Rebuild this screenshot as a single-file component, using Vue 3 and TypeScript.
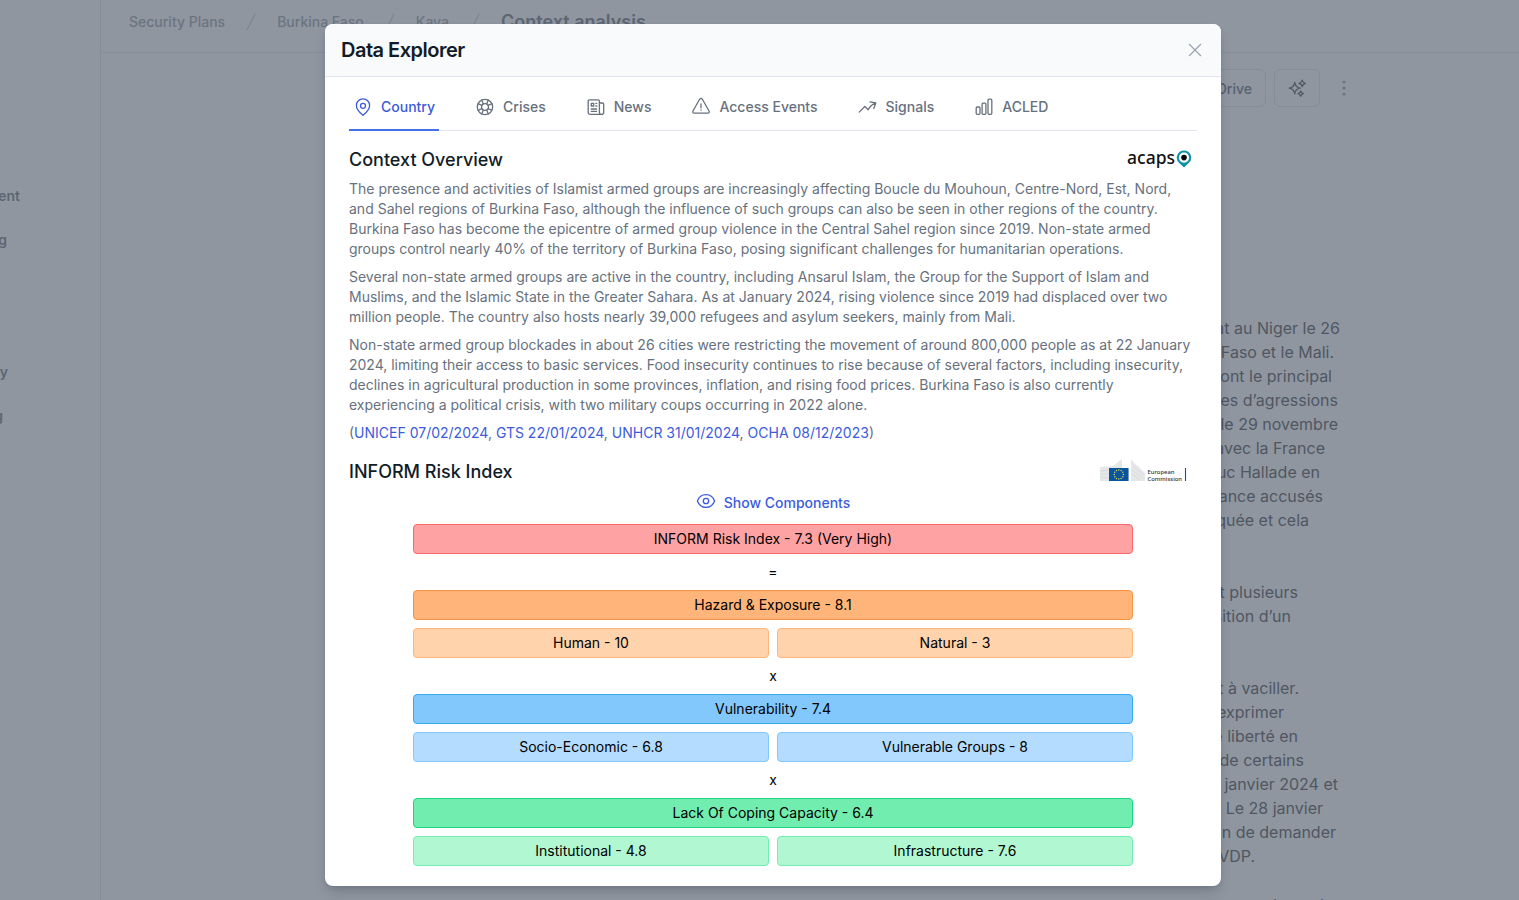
<script setup lang="ts">
interface Line { text: string; end: number; top: number }

const navItems: Line[] = [
  { text: 'Management', end: 20, top: 186 },
  { text: 'Planning', end: 7, top: 230 },
  { text: 'Security', end: 8, top: 362 },
  { text: 'Training', end: 3, top: 406 },
]

const crumbs = ['Security Plans', 'Burkina Faso', 'Kaya']

const article: Line[] = [
  { text: 'at au Niger le 26', end: 1340, top: 316 },
  { text: 'Faso et le Mali.', end: 1334, top: 340 },
  { text: 'ont le principal', end: 1332, top: 364 },
  { text: 'es d’agressions', end: 1338, top: 388 },
  { text: 'le 29 novembre', end: 1338, top: 412 },
  { text: 'avec la France', end: 1325, top: 436 },
  { text: 'Luc Hallade en', end: 1320, top: 460 },
  { text: 'France accusés', end: 1323, top: 484 },
  { text: 'quée et cela', end: 1309, top: 508 },
  { text: 'et plusieurs', end: 1298, top: 580 },
  { text: 'sition d’un', end: 1291, top: 604 },
  { text: 'nt à vaciller.', end: 1299, top: 676 },
  { text: 'exprimer', end: 1284, top: 700 },
  { text: 'de liberté en', end: 1298, top: 724 },
  { text: 'de certains', end: 1304, top: 748 },
  { text: 'janvier 2024 et', end: 1338, top: 772 },
  { text: 'Le 28 janvier', end: 1323, top: 796 },
  { text: 'n de demander', end: 1336, top: 820 },
  { text: 'VDP.', end: 1255, top: 844 },
  { text: 'de ce de', end: 1333, top: 893 },
]

const gapBefore = (list: Line[], i: number, lineHeight: number, start: number) =>
  list[i].top - (i === 0 ? start : list[i - 1].top + lineHeight)

const tabs = ['Country', 'Crises', 'News', 'Access Events', 'Signals', 'ACLED']

const paragraphs: string[][] = [
  [
    'The presence and activities of Islamist armed groups are increasingly affecting Boucle du Mouhoun, Centre-Nord, Est, Nord,',
    'and Sahel regions of Burkina Faso, although the influence of such groups can also be seen in other regions of the country.',
    'Burkina Faso has become the epicentre of armed group violence in the Central Sahel region since 2019. Non-state armed',
    'groups control nearly 40% of the territory of Burkina Faso, posing significant challenges for humanitarian operations.',
  ],
  [
    'Several non-state armed groups are active in the country, including Ansarul Islam, the Group for the Support of Islam and',
    'Muslims, and the Islamic State in the Greater Sahara. As at January 2024, rising violence since 2019 had displaced over two',
    'million people. The country also hosts nearly 39,000 refugees and asylum seekers, mainly from Mali.',
  ],
  [
    'Non-state armed group blockades in about 26 cities were restricting the movement of around 800,000 people as at 22 January',
    '2024, limiting their access to basic services. Food insecurity continues to rise because of several factors, including insecurity,',
    'declines in agricultural production in some provinces, inflation, and rising food prices. Burkina Faso is also currently',
    'experiencing a political crisis, with two military coups occurring in 2022 alone.',
  ],
]

const sources = ['UNICEF 07/02/2024', 'GTS 22/01/2024', 'UNHCR 31/01/2024', 'OCHA 08/12/2023']

interface Group { op: string; tone: string; title: string; parts: string[] }
const groups: Group[] = [
  { op: '=', tone: 'orange', title: 'Hazard & Exposure - 8.1', parts: ['Human - 10', 'Natural - 3'] },
  { op: 'x', tone: 'blue', title: 'Vulnerability - 7.4', parts: ['Socio-Economic - 6.8', 'Vulnerable Groups - 8'] },
  { op: 'x', tone: 'green', title: 'Lack Of Coping Capacity - 6.4', parts: ['Institutional - 4.8', 'Infrastructure - 7.6'] },
]

const stars = Array.from({ length: 12 }, (_, i) => ({
  x: 18.8 + 4.6 * Math.cos((i * Math.PI) / 6),
  y: 15.5 + 4.6 * Math.sin((i * Math.PI) / 6),
}))
</script>

<template>
  <div class="screen">
    <nav class="side">
      <span
        v-for="(n, i) in navItems" :key="i" class="nav-item"
        :style="{ width: n.end + 'px', marginTop: gapBefore(navItems, i, 20, 0) + 'px' }"
      ><span>{{ n.text }}</span></span>
    </nav>
    <div class="main">
      <header class="crumbs">
        <template v-for="c in crumbs" :key="c">
          <span class="crumb">{{ c }}</span>
          <svg class="slash" width="20" height="20" viewBox="0 0 20 20"><path d="M6.2 17.6 13.8 2.4" /></svg>
        </template>
        <span class="current">Context analysis</span>
      </header>
      <div class="toolbar">
        <button class="btn drive">Save to Drive</button>
        <button class="btn spark">
          <svg width="20" height="20" viewBox="0 0 20 20">
            <path d="M7.7 4.4Q8.3 9.4 13.2 10.2Q8.3 11 7.7 16Q7.1 11 2.2 10.2Q7.1 9.4 7.7 4.4Z" />
            <path d="M15.2 2Q15.7 4.8 18.4 5.3Q15.7 5.8 15.2 8.6Q14.7 5.8 12 5.3Q14.7 4.8 15.2 2Z" />
            <path d="M13.7 13Q14.2 15.2 16.4 15.7Q14.2 16.2 13.7 18.4Q13.2 16.2 11 15.7Q13.2 15.2 13.7 13Z" />
          </svg>
        </button>
        <svg class="dots" width="8" height="20" viewBox="0 0 8 20">
          <circle cx="4" cy="4" r="1.5" /><circle cx="4" cy="10" r="1.5" /><circle cx="4" cy="16" r="1.5" />
        </svg>
      </div>
      <article class="article">
        <span
          v-for="(l, i) in article" :key="i" class="article-line"
          :style="{ width: l.end - 1101 + 'px', marginTop: gapBefore(article, i, 24, 107) + 'px' }"
        >{{ l.text }}</span>
      </article>
    </div>

    <section class="modal">
      <header class="modal-head">
        <h1>Data Explorer</h1>
        <svg width="20" height="20" viewBox="0 0 20 20"><path d="M4.4 4.4 15.6 15.6M15.6 4.4 4.4 15.6" /></svg>
      </header>
      <div class="modal-body">
        <div class="tabs">
          <div v-for="(t, i) in tabs" :key="t" class="tab" :class="{ active: i === 0 }">
            <svg width="20" height="20" viewBox="0 0 20 20">
              <template v-if="i === 0">
                <path d="M10 18.2C8.9 17.1 3.4 13.6 3.4 8.5A6.6 6.6 0 0 1 16.6 8.5C16.6 13.6 11.1 17.1 10 18.2Z" />
                <circle cx="10" cy="8.8" r="2.5" />
              </template>
              <template v-else-if="i === 1">
                <circle cx="10" cy="10" r="7.7" /><circle cx="10" cy="10" r="3.4" />
                <path d="M6.7 3.1 8.3 6.9M13.3 3.1 11.7 6.9M6.7 16.9 8.3 13.1M13.3 16.9 11.7 13.1M3.1 6.7 6.9 8.3M3.1 13.3 6.9 11.7M16.9 6.7 13.1 8.3M16.9 13.3 13.1 11.7" />
              </template>
              <template v-else-if="i === 2">
                <path d="M13.4 6H16.4Q17.7 6 17.7 7.2V15.3A2.1 2.1 0 0 1 13.4 15.3V4Q13.4 2.8 12.2 2.8H3.4Q2.2 2.8 2.2 4V15.5Q2.2 17.3 4 17.3H15.5M5.2 12H10.6M5.2 14.3H10.6M9.8 6.3H10.8M9.8 9H10.8" />
                <path d="M5.3 6.3H7.7V9H5.3Z" />
              </template>
              <template v-else-if="i === 3">
                <path d="M8.6 2.3Q10 .4 11.4 2.3L17.9 13.7Q18.9 16 16.7 16.2H3.3Q1.1 16 2.1 13.7ZM10 7V10.8M10 12.8V13.2" />
              </template>
              <template v-else-if="i === 4">
                <path d="M1.2 15.1 6.8 9.5 10.2 12.8Q11.8 8.8 17.3 6.2M12 4.9 17.8 6 15.8 11.4" />
              </template>
              <template v-else>
                <rect x="2.2" y="10" width="3.8" height="7.3" rx="1" />
                <rect x="8.1" y="6.2" width="3.8" height="11.1" rx="1" />
                <rect x="14" y="2.2" width="3.8" height="15.1" rx="1" />
              </template>
            </svg>
            <span>{{ t }}</span>
          </div>
        </div>

        <div class="title-row">
          <h2>Context Overview</h2>
          <div class="acaps">
            <span>acaps</span>
            <svg width="16" height="20" viewBox="0 0 16 20">
              <path class="pin" d="M8 1.4A7.2 7.2 0 0 0 3.5 14.2L8 18.6 12.5 14.2A7.2 7.2 0 0 0 8 1.4Z" />
              <circle class="hole" cx="8" cy="8.6" r="5.1" /><circle class="dot" cx="8" cy="8.6" r="2.8" />
            </svg>
          </div>
        </div>
        <div class="prose">
          <p v-for="(p, i) in paragraphs" :key="i"><span v-for="l in p" :key="l" class="row">{{ l }}</span></p>
          <p>(<template v-for="(s, i) in sources" :key="s"><template v-if="i">, </template><a>{{ s }}</a></template>)</p>
        </div>

        <div class="title-row inform">
          <h2>INFORM Risk Index</h2>
          <svg class="ec" width="90" height="28" viewBox="0 0 90 28">
            <path class="pale" d="M0 8 13 7 22 0V9H29V22H0Z" />
            <path class="pale" d="M31 0 35 5 38 7 45 14V22H31Z" />
            <path class="streak" d="M0 12 9 11M0 15H9M0 18 9 19M33 7 44 16M32 11 43 19M32 15 40 21" />
            <rect class="flag" x="9" y="9" width="19.5" height="13" />
            <circle v-for="(s, i) in stars" :key="i" class="star" :cx="s.x" :cy="s.y" r=".75" />
            <text x="47.5" y="15.2" textLength="27">European</text>
            <text x="47.5" y="21.8" textLength="34.5">Commission</text>
            <path class="bar-mark" d="M85.5 9V22" />
          </svg>
        </div>

        <div class="show">
          <svg width="20" height="20" viewBox="0 0 20 20">
            <path d="M1.4 10C2.8 6.2 6 3.6 10 3.6S17.2 6.2 18.6 10C17.2 13.8 14 16.4 10 16.4S2.8 13.8 1.4 10Z" />
            <circle cx="10" cy="10" r="2.7" />
          </svg>
          <span>Show Components</span>
        </div>

        <div class="index">
          <div class="bar red">INFORM Risk Index - 7.3 (Very High)</div>
          <template v-for="g in groups" :key="g.title">
            <div class="op">{{ g.op }}</div>
            <div class="bar" :class="g.tone">{{ g.title }}</div>
            <div class="pair">
              <div v-for="p in g.parts" :key="p" class="bar" :class="g.tone + '-light'">{{ p }}</div>
            </div>
          </template>
        </div>
      </div>
    </section>
  </div>
</template>

<style>
html, body { margin: 0; overflow: hidden; }
</style>

<style scoped>
* { box-sizing: border-box; }
.screen {
  position: relative; display: flex; width: 1519px; height: 900px; overflow: hidden;
  background: #8f96a0; font-family: Inter, "Liberation Sans", sans-serif; color: #000;
}
svg { fill: none; stroke: currentColor; stroke-width: 1.3; stroke-linecap: round; stroke-linejoin: round; flex: none; }
.side { width: 101px; height: 900px; border-right: 1px solid #858c9a; display: flex; flex-direction: column; flex: none; }
.nav-item { display: flex; justify-content: flex-end; height: 20px; line-height: 20px; font-size: 14px; font-weight: 600; color: #5d6673; overflow: hidden; white-space: nowrap; flex: none; }
.main { flex: 1; min-width: 0; }
.crumbs { display: flex; align-items: center; height: 53px; padding: 0 0 9px 28px; border-bottom: 1px solid #858c9a; font-size: 14px; font-weight: 500; color: #6b7480; white-space: nowrap; }
.slash { margin: 0 16px; stroke: #7d8591; stroke-width: 1.1; }
.current { font-size: 18px; font-weight: 600; color: #5c6572; }
.toolbar { display: flex; align-items: center; height: 38px; margin-top: 16px; padding-left: 1019px; }
.btn { height: 38px; border: 1px solid #858c9a; border-radius: 6px; background: transparent; font: 500 14px Inter, sans-serif; color: #566070; padding: 0 13px; }
.drive { width: 146px; text-align: right; white-space: nowrap; }
.spark { width: 46px; margin-left: 8px; padding: 0 12px; display: flex; align-items: center; color: #4f5865; }
.spark svg { stroke-width: 1.2; }
.dots { margin-left: 20px; fill: #6b7480; stroke: none; }
.article { display: flex; flex-direction: column; width: 300px; margin-left: 1000px; }
.article-line { flex: none; height: 24px; line-height: 24px; font-size: 16px; color: #505762; text-align: right; white-space: nowrap; }
.modal { position: absolute; left: 325px; top: 24px; width: 896px; height: 862px; border-radius: 8px; background: #fff; overflow: hidden; box-shadow: 0 8px 14px -3px rgba(30, 40, 55, .2), 0 3px 6px -2px rgba(30, 40, 55, .15); }
.modal-head { height: 53px; padding: 0 16px; display: flex; align-items: center; justify-content: space-between; background: #f9fafc; border-bottom: 1px solid #e1e4ec; color: #949cb0; }
h1 { margin: 0; font-size: 20px; line-height: 28px; font-weight: 600; letter-spacing: -.5px; color: #111c28; }
.modal-body { padding: 0 24px; }
.tabs { display: flex; gap: 32px; height: 54px; border-bottom: 1px solid #e1e4ec; }
.tab { display: flex; align-items: center; gap: 8px; height: 54px; padding: 6px 4px 0; font-size: 14px; font-weight: 500; color: #67717e; border-bottom: 2px solid transparent; white-space: nowrap; }
.tab svg { margin-top: 2px; }
.tab.active { color: #3c5bdc; border-bottom-color: #4670e8; }
.title-row { display: flex; justify-content: space-between; align-items: flex-start; height: 28px; margin-top: 14px; }
h2 { margin: 0; font-size: 18px; line-height: 29px; font-weight: 500; color: #111c28; white-space: nowrap; }
.acaps { display: flex; align-items: center; gap: 1px; padding-right: 5px; margin-top: 4px; }
.acaps span { font: 500 17.5px/20px "Noto Sans", sans-serif; color: #111; margin-top: -4px; }
.acaps svg { stroke: none; }
.pin { fill: #0e94a5; }
.hole { fill: #fff; }
.dot { fill: #05080a; }
.prose { display: flex; flex-direction: column; gap: 8px; margin-top: 6px; font-size: 14px; line-height: 20px; color: #67717e; }
p { margin: 0; }
.row { display: block; white-space: nowrap; }
a { color: #3c5bdc; }
.inform { margin-top: 14px; }
.ec { margin: 2px 7px 0 0; stroke: none; }
.pale { fill: #e5e7e8; }
.streak { stroke: #c8ccce; stroke-width: .5; }
.flag { fill: #07559f; }
.star { fill: #d9d34a; }
.ec text { font: 500 5.8px "Noto Sans", sans-serif; fill: #333; }
.bar-mark { stroke: #07559f; stroke-width: 1.1; stroke-linecap: butt; }
.show { display: flex; align-items: center; justify-content: center; gap: 8px; height: 20px; margin-top: 8px; font-size: 14px; font-weight: 500; line-height: 20px; color: #3c5bdc; }
.show svg { margin-top: -4px; }
.index { display: flex; flex-direction: column; gap: 8px; width: 720px; margin: 11px auto 0; font-size: 14px; line-height: 20px; text-align: center; }
.bar { height: 30px; line-height: 28px; border: 1px solid; border-radius: 4px; }
.op { height: 20px; }
.pair { display: grid; grid-template-columns: 1fr 1fr; gap: 8px; }
.red { background: #ffa2a4; border-color: #fb696d; }
.orange { background: #ffb579; border-color: #fb9140; }
.orange-light { background: #ffd3ab; border-color: #ffb579; }
.blue { background: #82c8fc; border-color: #38a9f5; }
.blue-light { background: #b4dcfe; border-color: #82c8fc; }
.green { background: #72edb0; border-color: #1cd684; }
.green-light { background: #b1f7d2; border-color: #72edb0; }
</style>
